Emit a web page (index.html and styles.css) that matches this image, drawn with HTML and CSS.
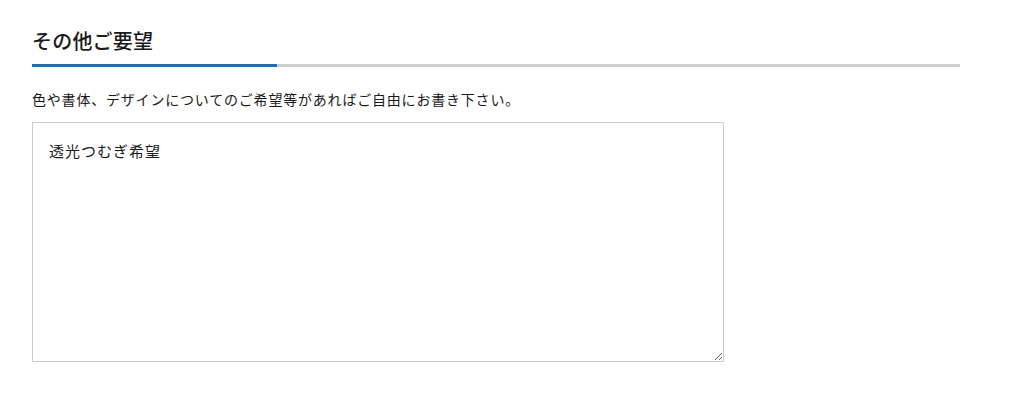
FILE: index.html
```html
<!DOCTYPE html>
<html lang="ja">
<head>
<meta charset="utf-8">
<link rel="stylesheet" href="styles.css">
</head>
<body>
<section class="section">
  <h2 class="section-title"><span class="section-title-text">その他ご要望</span></h2>
  <p class="note">色や書体、デザインについてのご希望等があればご自由にお書き下さい。</p>
  <textarea class="request">透光つむぎ希望</textarea>
</section>
</body>
</html>
```

FILE: styles.css
```css
html, body {
  margin: 0;
  padding: 0;
  background: #ffffff;
}
body {
  font-family: "Noto Sans CJK JP", "Noto Sans", sans-serif;
  color: #1a1a1a;
}
.section {
  padding: 26px 0 0 32px;
  width: 928px;
}
.section-title {
  margin: 0;
  font-size: 20px;
  font-weight: 500;
  line-height: 30px;
  border-bottom: 3px solid #cfcfcf;
  display: flex;
}
.section-title-text {
  display: block;
  width: 245px;
  padding-bottom: 8px;
  border-bottom: 3px solid #1f6fb0;
  margin-bottom: -3px;
  letter-spacing: 0.2px;
}
.note {
  margin: 21px 0 0;
  font-size: 14px;
  line-height: 22px;
  letter-spacing: 0.8px;
  color: #1a1a1a;
}
.request {
  display: block;
  box-sizing: border-box;
  margin-top: 12px;
  width: 692px;
  height: 240px;
  padding: 17px 16px;
  border: 1px solid #cccccc;
  font-family: "Noto Sans CJK JP", "Noto Sans", sans-serif;
  font-size: 15px;
  line-height: 22px;
  letter-spacing: 1px;
  color: #1a1a1a;
  background: #ffffff;
  resize: both;
}
```
